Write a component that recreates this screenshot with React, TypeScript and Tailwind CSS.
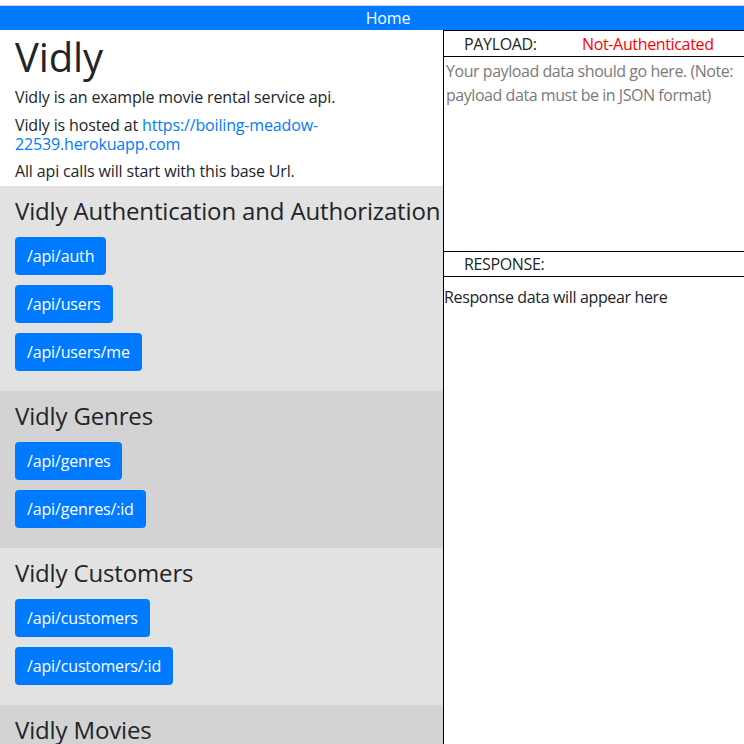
import React from "react";

const sections: { title: string; bg: string; routes: string[] }[] = [
  { title: "Vidly Authentication and Authorization", bg: "bg-[#e2e2e2]", routes: ["/api/auth", "/api/users", "/api/users/me"] },
  { title: "Vidly Genres", bg: "bg-[#d3d3d3]", routes: ["/api/genres", "/api/genres/:id"] },
  { title: "Vidly Customers", bg: "bg-[#e2e2e2]", routes: ["/api/customers", "/api/customers/:id"] },
  { title: "Vidly Movies", bg: "bg-[#d3d3d3]", routes: ["/api/movies", "/api/movies/:id"] },
];

export default function App() {
  return (
    <div
      className="w-[744px] h-[744px] overflow-hidden bg-white text-[#212529] text-[16px] tracking-[-0.15px]"
      style={{ fontFamily: '"Open Sans", "Noto Sans", sans-serif' }}
    >
      <div className="h-[5px] bg-white" />
      <div className="h-[1px] bg-[#d4d4d4]" />
      <div className="h-[24px] bg-[#007bff] text-white flex items-center justify-center pl-[32px] leading-[24px]">
        Home
      </div>
      <div className="flex">
        <div className="w-[443px] shrink-0">
          <div className="pl-[15px] pt-[3px] pb-[5px] bg-white">
            <h1 className="text-[40px] leading-[48px] font-medium mb-[7px]">Vidly</h1>
            <p className="leading-[19px] mb-[9px]">Vidly is an example movie rental service api.</p>
            <p className="leading-[19px] mb-[8px]">
              Vidly is hosted at{" "}
              <a className="text-[#007bff]">https://boiling-meadow-22539.herokuapp.com</a>
            </p>
            <p className="leading-[19px]">All api calls will start with this base Url.</p>
          </div>
          {sections.map((s) => (
            <div key={s.title} className={`${s.bg} pl-[15px] pt-[10px] pb-[10px] whitespace-nowrap`}>
              <h3 className="text-[24px] leading-[29px] font-medium mb-[12px]">{s.title}</h3>
              {s.routes.map((r) => (
                <div key={r} className="mb-[10px]">
                  <button className="h-[38px] px-[12px] rounded-[4px] bg-[#007bff] text-white text-[16px] leading-[24px] tracking-[-0.15px]">
                    {r}
                  </button>
                </div>
              ))}
            </div>
          ))}
        </div>
        <div className="flex-1 border-l border-t border-black h-[714px] flex flex-col tracking-[-0.35px]">
          <div className="h-[26px] shrink-0 border-b border-black flex items-center pl-[20px] leading-[24px]">
            <span className="w-[118px]">PAYLOAD:</span>
            <span className="text-[#ff0000]">Not-Authenticated</span>
          </div>
          <textarea
            className="h-[194px] shrink-0 w-full px-[2px] py-[2px] leading-[24px] text-[16px] tracking-[-0.45px] resize-none outline-none placeholder:text-[#7a7a7a]"
            placeholder="Your payload data should go here. (Note: payload data must be in JSON format)"
          />
          <div className="h-[26px] shrink-0 border-t border-b border-black flex items-center pl-[20px] leading-[24px]">
            RESPONSE:
          </div>
          <div className="pt-[8px] leading-[24px]">Response data will appear here</div>
        </div>
      </div>
    </div>
  );
}
